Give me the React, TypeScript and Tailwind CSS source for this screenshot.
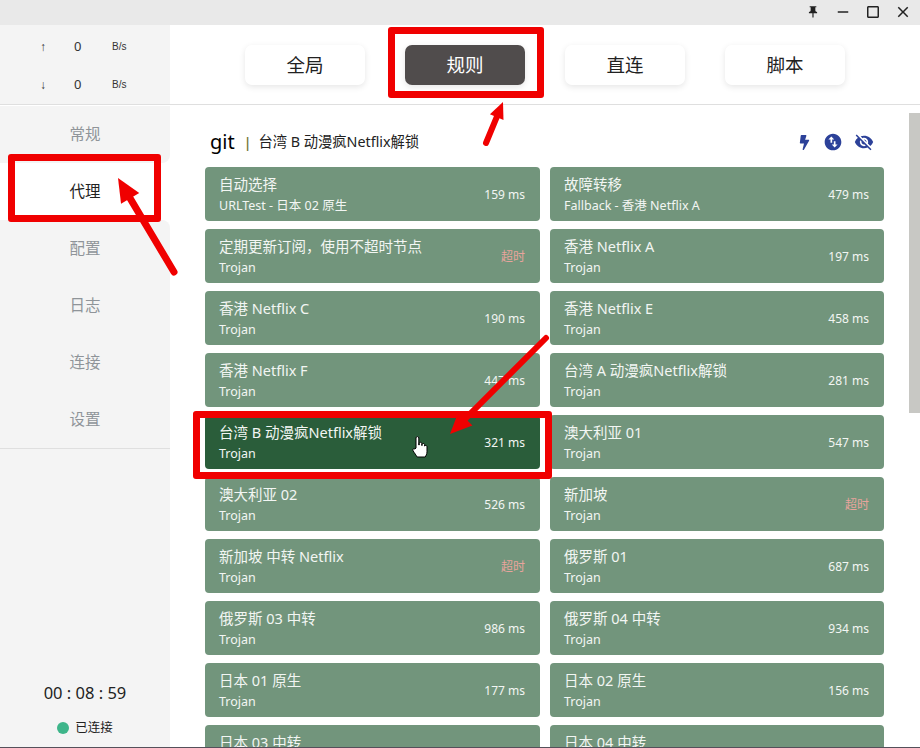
import { MdClose, MdCropSquare, MdPushPin, MdRemove, MdSwapVerticalCircle, MdVisibilityOff } from "react-icons/md";
import { FaBolt } from "react-icons/fa";

const modes = ["全局", "规则", "直连", "脚本"];
const navItems = ["常规", "代理", "配置", "日志", "连接", "设置"];

const proxies = [
  { name: "自动选择", type: "URLTest - 日本 02 原生", delay: "159 ms" },
  { name: "故障转移", type: "Fallback - 香港 Netflix A", delay: "479 ms" },
  { name: "定期更新订阅，使用不超时节点", type: "Trojan", delay: "超时" },
  { name: "香港 Netflix A", type: "Trojan", delay: "197 ms" },
  { name: "香港 Netflix C", type: "Trojan", delay: "190 ms" },
  { name: "香港 Netflix E", type: "Trojan", delay: "458 ms" },
  { name: "香港 Netflix F", type: "Trojan", delay: "447 ms" },
  { name: "台湾 A 动漫疯Netflix解锁", type: "Trojan", delay: "281 ms" },
  { name: "台湾 B 动漫疯Netflix解锁", type: "Trojan", delay: "321 ms", active: true },
  { name: "澳大利亚 01", type: "Trojan", delay: "547 ms" },
  { name: "澳大利亚 02", type: "Trojan", delay: "526 ms" },
  { name: "新加坡", type: "Trojan", delay: "超时" },
  { name: "新加坡 中转 Netflix", type: "Trojan", delay: "超时" },
  { name: "俄罗斯 01", type: "Trojan", delay: "687 ms" },
  { name: "俄罗斯 03 中转", type: "Trojan", delay: "986 ms" },
  { name: "俄罗斯 04 中转", type: "Trojan", delay: "934 ms" },
  { name: "日本 01 原生", type: "Trojan", delay: "177 ms" },
  { name: "日本 02 原生", type: "Trojan", delay: "156 ms" },
  { name: "日本 03 中转", type: "Trojan", delay: "201 ms" },
  { name: "日本 04 中转", type: "Trojan", delay: "215 ms" },
];

function ProxyCard({ name, type, delay, active }: { name: string; type: string; delay: string; active?: boolean }) {
  const timedOut = delay === "超时";
  return (
    <div
      className={`flex h-[54px] shrink-0 items-center justify-between rounded-[4px] pl-[14px] pr-[15px] text-white ${
        active ? "bg-[#2a5d3a]" : "bg-[#72957c]"
      }`}
    >
      <div className="min-w-0 self-start pt-[7px]">
        <p className="text-[14.5px] leading-[21px] text-[#f2f6f3]">{name}</p>
        <p className="text-[12.5px] leading-[22px] text-[#f2f6f3]">{type}</p>
      </div>
      <span className={`pt-[2px] text-[12px] ${timedOut ? "text-[#e8a49c]" : "text-[#f2f6f3]"}`}>{delay}</span>
    </div>
  );
}

function Arrow({
  x1,
  y1,
  x2,
  y2,
  width = 7,
  back = 26,
}: {
  x1: number;
  y1: number;
  x2: number;
  y2: number;
  width?: number;
  back?: number;
}) {
  const angle = Math.atan2(y2 - y1, x2 - x1);
  const spread = 0.42;
  const ax = x2 - back * Math.cos(angle - spread);
  const ay = y2 - back * Math.sin(angle - spread);
  const bx = x2 - back * Math.cos(angle + spread);
  const by = y2 - back * Math.sin(angle + spread);
  const nx = x2 - back * 0.7 * Math.cos(angle);
  const ny = y2 - back * 0.7 * Math.sin(angle);
  return (
    <g>
      <line x1={x1} y1={y1} x2={nx} y2={ny} stroke="#f00000" strokeWidth={width} strokeLinecap="round" />
      <polygon points={`${x2},${y2} ${ax},${ay} ${bx},${by}`} fill="#f00000" />
    </g>
  );
}

function HandCursor() {
  return (
    <svg className="absolute left-[412px] top-[435px]" width="16" height="24" viewBox="0 0 16 24">
      <path
        d="M4 13V3a1.4 1.4 0 0 1 2.8 0v7h.4V8.6a1.3 1.3 0 0 1 2.6 0V10.5h.3V9.4a1.3 1.3 0 0 1 2.5 0v1.6h.2a1.2 1.2 0 0 1 2.2.6v5.2c0 2.6-1.2 4-1.8 5.2H5.2C4 20 2.6 18.4 1 15.6c-.8-1.4.9-2.6 2-1.5z"
        fill="white"
        stroke="black"
        strokeWidth="1"
        strokeLinejoin="round"
      />
    </svg>
  );
}

export default function App() {
  return (
    <div className="relative flex h-[748px] w-[920px] flex-col overflow-hidden bg-white font-['Noto_Sans','Noto_Sans_CJK_SC',sans-serif] text-black">
      <div className="flex h-[25px] shrink-0 items-center justify-end gap-[12px] bg-[#e9e9e9] pr-[8px] pb-[1px] text-[#222]">
        <span className="flex w-[18px] justify-center">
          <MdPushPin size={14} />
        </span>
        <MdRemove size={18} />
        <MdCropSquare size={18} />
        <MdClose size={18} />
      </div>

      <div className="flex min-h-0 flex-1">
        <aside className="flex w-[170px] shrink-0 flex-col bg-[#f4f4f4]">
          <div className="flex h-[80px] shrink-0 flex-col justify-center gap-[20px] border-b border-[#dfdfdf] pt-[2px]">
            {["↑", "↓"].map((arrow) => (
              <div key={arrow} className="flex h-[18px] items-center text-[#333]">
                <span className="w-[47px] pr-[1px] text-right font-['Liberation_Sans',sans-serif] text-[12px]">{arrow}</span>
                <span className="w-[65px] pl-[27px] text-[13px]">0</span>
                <span className="font-['Liberation_Sans',sans-serif] text-[10px]">B/s</span>
              </div>
            ))}
          </div>

          <nav className="shrink-0 border-b border-[#dfdfdf] bg-white pt-[1px]">
            {navItems.map((item, index) => (
              <div
                key={item}
                className={`flex h-[57px] items-center justify-center text-[15.5px] ${
                  item === "代理" ? "bg-white text-[#222]" : "bg-[#f4f4f4] text-[#8f9499]"
                } ${index === 0 ? "rounded-br-[8px]" : ""} ${index === 2 ? "rounded-tr-[8px]" : ""}`}
              >
                {item}
              </div>
            ))}
          </nav>

          <div className="mt-auto flex flex-col items-center pb-[9px]">
            <p className="text-[16.5px] leading-[23px] text-[#222]">00 : 08 : 59</p>
            <div className="mt-[14px] flex h-[20px] items-center gap-[6px]">
              <span className="h-[12px] w-[12px] rounded-full bg-[#3eb58a]" />
              <span className="text-[12.5px] text-[#222]">已连接</span>
            </div>
          </div>
        </aside>

        <main className="flex min-w-0 flex-1 flex-col">
          <header className="flex h-[80px] shrink-0 items-center justify-center gap-[40px] border-b border-[#dfdfdf]">
            {modes.map((mode) => (
              <div
                key={mode}
                className={`flex h-[40px] w-[120px] items-center justify-center rounded-[7px] text-[18.5px] shadow-[0_2px_6px_rgba(0,0,0,0.1)] ${
                  mode === "规则" ? "bg-[#504c4c] text-white" : "bg-white text-[#222]"
                }`}
              >
                {mode}
              </div>
            ))}
          </header>

          <div className="flex min-h-0 flex-1">
            <div className="min-w-0 flex-1 overflow-hidden pl-[35px] pr-[25px]">
              <div className="flex h-[62px] items-center pl-[5px] pr-[10px] pt-[12px]">
                <span className="text-[20px] leading-none">git</span>
                <span className="ml-[9px] text-[14px] font-semibold text-[#77773a]">|</span>
                <span className="ml-[7px] text-[14.3px] text-[#222]">台湾 B 动漫疯Netflix解锁</span>
                <div className="ml-auto flex items-center gap-[11px] text-[#2c4199]">
                  <FaBolt size={15} />
                  <MdSwapVerticalCircle size={20} />
                  <MdVisibilityOff size={20} />
                </div>
              </div>
              <div className="grid grid-cols-[335px_334px] gap-x-[10px] gap-y-[8px]">
                {proxies.map((proxy) => (
                  <ProxyCard key={proxy.name} {...proxy} />
                ))}
              </div>
            </div>
            <div className="w-[11px] shrink-0 pt-[8px]">
              <div className="h-[300px] bg-[#c8c8c4]" />
            </div>
          </div>
        </main>
      </div>

      <div className="h-[1px] shrink-0 bg-[#55505a]" />

      {/* annotations pasted over the screenshot */}
      <div className="absolute left-[8px] top-[154px] h-[68px] w-[153px] rounded-[3px] border-[7px] border-[#f00000]" />
      <div className="absolute left-[388px] top-[27px] h-[71px] w-[156px] rounded-[3px] border-[7px] border-[#f00000]" />
      <div className="absolute left-[193px] top-[411px] h-[68px] w-[359px] rounded-[3px] border-[7px] border-[#f00000]" />
      <svg className="absolute inset-0" width="920" height="748" viewBox="0 0 920 748" fill="none">
        <Arrow x1={174} y1={272} x2={118} y2={178} />
        <Arrow x1={486} y1={143} x2={503} y2={102} width={6} back={18} />
        <Arrow x1={546} y1={338} x2={450} y2={434} width={6} back={24} />
      </svg>
      <HandCursor />
    </div>
  );
}
